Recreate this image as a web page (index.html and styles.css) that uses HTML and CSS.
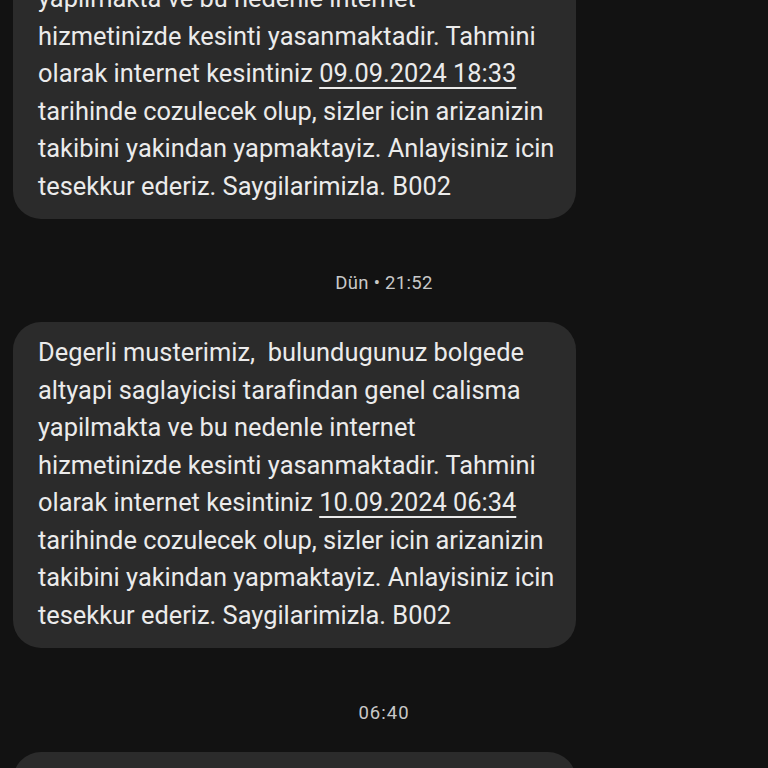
FILE: index.html
```html
<!DOCTYPE html>
<html lang="tr">

<head>
    <meta charset="UTF-8">
    <meta name="viewport" content="width=device-width, initial-scale=1.0">
    <title>Mesajlar</title>
    <link rel="stylesheet" href="styles.css">
</head>

<body>
    <div class="thread">
        <div class="bubble">
            <p>Degerli musterimiz,&nbsp; bulundugunuz bolgede<br>
            altyapi saglayicisi tarafindan genel calisma<br>
            yapilmakta ve bu nedenle internet<br>
            hizmetinizde kesinti yasanmaktadir. Tahmini<br>
            olarak internet kesintiniz <a href="#">09.09.2024 18:33</a><br>
            tarihinde cozulecek olup, sizler icin arizanizin<br>
            takibini yakindan yapmaktayiz. Anlayisiniz icin<br>
            tesekkur ederiz. Saygilarimizla. B002</p>
        </div>

        <div class="stamp">Dün • 21:52</div>

        <div class="bubble">
            <p>Degerli musterimiz,&nbsp; bulundugunuz bolgede<br>
            altyapi saglayicisi tarafindan genel calisma<br>
            yapilmakta ve bu nedenle internet<br>
            hizmetinizde kesinti yasanmaktadir. Tahmini<br>
            olarak internet kesintiniz <a href="#">10.09.2024 06:34</a><br>
            tarihinde cozulecek olup, sizler icin arizanizin<br>
            takibini yakindan yapmaktayiz. Anlayisiniz icin<br>
            tesekkur ederiz. Saygilarimizla. B002</p>
        </div>

        <div class="stamp stamp-short">06:40</div>

        <div class="bubble">
            <p>Degerli musterimiz,&nbsp; bulundugunuz bolgede<br>
            altyapi saglayicisi tarafindan genel calisma</p>
        </div>
    </div>
</body>

</html>
```

FILE: styles.css
```css
/* Page */
body {
    margin: 0;
    padding: 0;
    background-color: #121212;
    font-family: Roboto, "Noto Sans", sans-serif;
    height: 768px;
    overflow: hidden;
}

/* Conversation list, scrolled so the first message is cut off */
.thread {
    display: flex;
    flex-direction: column;
    align-items: flex-start;
    padding: 0 13px;
    margin-top: -107px;
}

/* Message bubble */
.bubble {
    width: 563px;
    box-sizing: border-box;
    background-color: #2b2b2b;
    border-radius: 28px;
    padding: 12px 25px 14px;
}

.bubble p {
    margin: 0;
    color: #ebebeb;
    font-size: 25.4px;
    line-height: 37.5px;
    white-space: nowrap;
}

.bubble a {
    color: #ebebeb;
    text-decoration: underline;
    text-underline-offset: 5px;
    text-decoration-thickness: 2px;
}

/* Time separators */
.stamp {
    align-self: center;
    color: #c8c8c8;
    font-size: 18.5px;
    letter-spacing: 0.3px;
    line-height: 20px;
    padding: 54px 0 29px;
}

.stamp-short {
    padding: 55px 0 29px;
    letter-spacing: 1px;
}
```
